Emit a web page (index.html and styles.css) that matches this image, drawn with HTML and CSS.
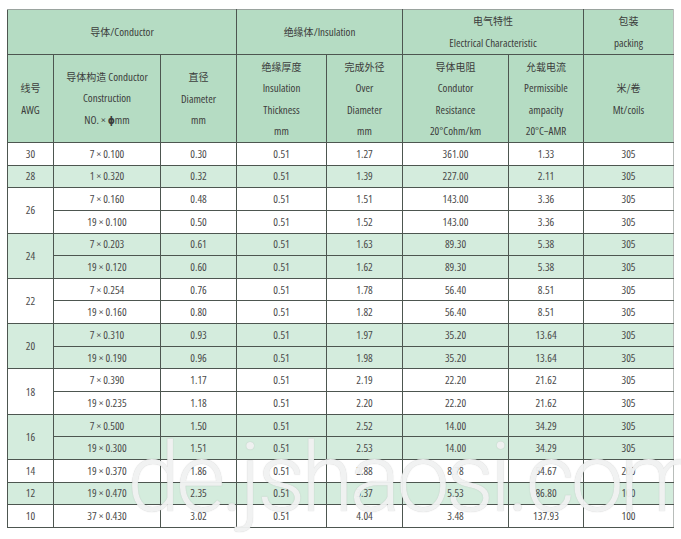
FILE: index.html
```html
<!DOCTYPE html>
<html>
<head>
<meta charset="utf-8">
<link rel="stylesheet" href="styles.css">
</head>
<body>
<div class="page">
<table class="spec">
<colgroup>
<col class="c1"><col class="c2"><col class="c3"><col class="c4"><col class="c5"><col class="c6"><col class="c7"><col class="c8">
</colgroup>
<thead>
<tr class="h1">
<th colspan="3"><span class="zh">导体</span>/Conductor</th>
<th colspan="2"><span class="zh">绝缘体</span>/Insulation</th>
<th colspan="2"><span class="zh">电气特性</span><br>Electrical Characteristic</th>
<th><span class="zh">包装</span><br>packing</th>
</tr>
<tr class="h2">
<th><span class="zh">线号</span><br>AWG</th>
<th><span class="zh">导体构造</span> Conductor<br>Construction<br>NO. × <b class="phi">ϕ</b>mm</th>
<th><span class="zh">直径</span><br>Diameter<br>mm</th>
<th><span class="zh">绝缘厚度</span><br>Insulation<br>Thickness<br>mm</th>
<th><span class="zh">完成外径</span><br>Over<br>Diameter<br>mm</th>
<th><span class="zh">导体电阻</span><br>Condutor<br>Resistance<br>20°Cohm/km</th>
<th><span class="zh">允载电流</span><br>Permissible<br>ampacity<br>20°C−AMR</th>
<th><span class="zh">米/卷</span><br>Mt/coils</th>
</tr>
</thead>
<tbody>
<tr class="w"><td>30</td><td>7 × 0.100</td><td>0.30</td><td>0.51</td><td>1.27</td><td>361.00</td><td>1.33</td><td>305</td></tr>
<tr class="g"><td>28</td><td>1 × 0.320</td><td>0.32</td><td>0.51</td><td>1.39</td><td>227.00</td><td>2.11</td><td>305</td></tr>
<tr class="w"><td rowspan="2">26</td><td>7 × 0.160</td><td>0.48</td><td>0.51</td><td>1.51</td><td>143.00</td><td>3.36</td><td>305</td></tr>
<tr class="w"><td>19 × 0.100</td><td>0.50</td><td>0.51</td><td>1.52</td><td>143.00</td><td>3.36</td><td>305</td></tr>
<tr class="g"><td rowspan="2">24</td><td>7 × 0.203</td><td>0.61</td><td>0.51</td><td>1.63</td><td>89.30</td><td>5.38</td><td>305</td></tr>
<tr class="g"><td>19 × 0.120</td><td>0.60</td><td>0.51</td><td>1.62</td><td>89.30</td><td>5.38</td><td>305</td></tr>
<tr class="w"><td rowspan="2">22</td><td>7 × 0.254</td><td>0.76</td><td>0.51</td><td>1.78</td><td>56.40</td><td>8.51</td><td>305</td></tr>
<tr class="w"><td>19 × 0.160</td><td>0.80</td><td>0.51</td><td>1.82</td><td>56.40</td><td>8.51</td><td>305</td></tr>
<tr class="g"><td rowspan="2">20</td><td>7 × 0.310</td><td>0.93</td><td>0.51</td><td>1.97</td><td>35.20</td><td>13.64</td><td>305</td></tr>
<tr class="g"><td>19 × 0.190</td><td>0.96</td><td>0.51</td><td>1.98</td><td>35.20</td><td>13.64</td><td>305</td></tr>
<tr class="w"><td rowspan="2">18</td><td>7 × 0.390</td><td>1.17</td><td>0.51</td><td>2.19</td><td>22.20</td><td>21.62</td><td>305</td></tr>
<tr class="w"><td>19 × 0.235</td><td>1.18</td><td>0.51</td><td>2.20</td><td>22.20</td><td>21.62</td><td>305</td></tr>
<tr class="g"><td rowspan="2">16</td><td>7 × 0.500</td><td>1.50</td><td>0.51</td><td>2.52</td><td>14.00</td><td>34.29</td><td>305</td></tr>
<tr class="g"><td>19 × 0.300</td><td>1.51</td><td>0.51</td><td>2.53</td><td>14.00</td><td>34.29</td><td>305</td></tr>
<tr class="w"><td>14</td><td>19 × 0.370</td><td>1.86</td><td>0.51</td><td>2.88</td><td>8.78</td><td>54.67</td><td>200</td></tr>
<tr class="g"><td>12</td><td>19 × 0.470</td><td>2.35</td><td>0.51</td><td>3.37</td><td>5.53</td><td>86.80</td><td>100</td></tr>
<tr class="w"><td>10</td><td>37 × 0.430</td><td>3.02</td><td>0.51</td><td>4.04</td><td>3.48</td><td>137.93</td><td>100</td></tr>
</tbody>
</table>
<div class="watermark">de.jshaosi.com</div>
</div>
</body>
</html>
```
FILE: styles.css
```css
html, body {
  margin: 0;
  padding: 0;
  background: #ffffff;
}
.page {
  position: relative;
  width: 681px;
  height: 539px;
  overflow: hidden;
  padding: 9px 0 0 7px;
  box-sizing: border-box;
}
.spec {
  border-collapse: collapse;
  table-layout: fixed;
  width: 666px;
  font-family: "Open Sans", "Liberation Sans", "Noto Sans CJK SC", sans-serif;
  font-stretch: 82%;
  font-size: 11px;
  color: #4a4a4a;
  border-top: 1px solid #9aa39e;
  border-right: 1px solid #b8bdba;
  border-left: 1px solid #4d5650;
  border-bottom: 1px solid #4d5650;
}
.c1 { width: 46px; }
.c2 { width: 107px; }
.c3 { width: 76px; }
.c4 { width: 90px; }
.c5 { width: 76px; }
.c6 { width: 106px; }
.c7 { width: 75px; }
.c8 { width: 90px; }
.spec th, .spec td {
  border: 1px solid #4d5650;
  text-align: center;
  vertical-align: middle;
  padding: 0;
}
.spec th {
  background: #b5dcc3;
  font-weight: normal;
  color: #3c3c3c;
  line-height: 21.5px;
}
.spec tr.h1 th { height: 43px; line-height: 22px; }
.spec tr.h2 th { height: 87px; }
.spec tr.h1 th:last-child, .spec tr.h2 th:last-child { border-right-color: #b8bdba; }
.spec td { height: 21.65px; line-height: 14px; }
.spec tr.g td { background: #d4ecdd; }
.spec tr.w td { background: #ffffff; }
.spec td:last-child { border-right-color: #b8bdba; }
.spec thead tr.h1 th { border-top-color: #9aa39e; }
.zh {
  font-family: "Noto Sans CJK SC", sans-serif;
  font-size: 10px;
}
.phi {
  font-family: "DejaVu Sans", sans-serif;
  font-weight: bold;
  font-size: 10px;
}
.watermark {
  position: absolute;
  left: 127px;
  top: 430px;
  font-family: Roboto, "Liberation Sans", sans-serif;
  font-weight: 300;
  font-size: 96px;
  line-height: 1;
  letter-spacing: -4.5px;
  color: rgba(244, 245, 245, 0.92);
  text-shadow: 0 0 1px rgba(140, 140, 140, 0.5);
  white-space: nowrap;
  pointer-events: none;
}
```
